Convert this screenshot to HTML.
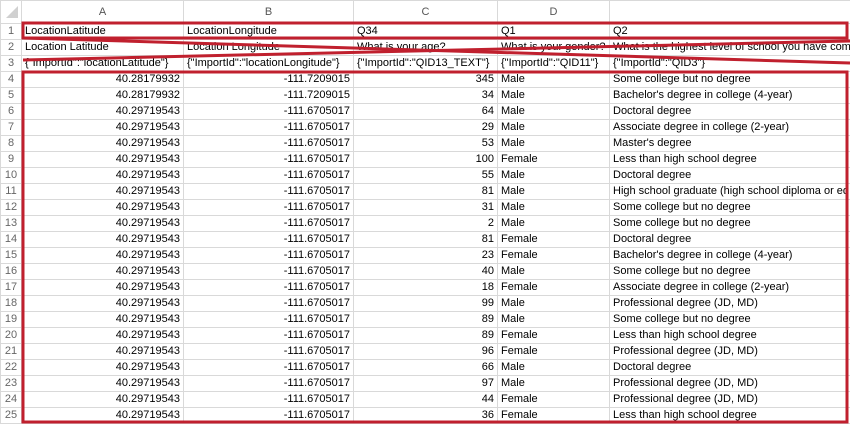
<!DOCTYPE html>
<html><head><meta charset="utf-8"><style>
body{margin:0;width:850px;height:424px;overflow:hidden;background:#fff;font-family:"Liberation Sans",Arial,sans-serif;font-size:11px;color:#000;position:relative}
table{border-collapse:collapse;table-layout:fixed;position:absolute;left:0;top:0;width:869px}
td{box-sizing:border-box;height:16px;padding:0 3px;border:1px solid #d9d9d9;white-space:nowrap;overflow:hidden;line-height:15px}
tr.h td{height:23px;text-align:center;color:#555;font-size:11px}
td.n{text-align:center;color:#666;padding:0;background:#fff}
td.r{text-align:right}
svg{position:absolute;left:0;top:0}
</style></head><body>
<table>
<colgroup><col style="width:21px"><col style="width:162px"><col style="width:170px"><col style="width:144px"><col style="width:112px"><col style="width:260px"></colgroup>
<tr class="h"><td class="n" style="width:21px"></td><td style="width:162px">A</td><td style="width:170px">B</td><td style="width:144px">C</td><td style="width:112px">D</td><td style="width:260px"></td></tr>
<tr><td class="n">1</td><td>LocationLatitude</td><td>LocationLongitude</td><td>Q34</td><td>Q1</td><td>Q2</td></tr>
<tr><td class="n">2</td><td>Location Latitude</td><td>Location Longitude</td><td>What is your age?</td><td>What is your gender?</td><td>What is the highest level of school you have com</td></tr>
<tr><td class="n">3</td><td>{"ImportId":"locationLatitude"}</td><td>{"ImportId":"locationLongitude"}</td><td>{"ImportId":"QID13_TEXT"}</td><td>{"ImportId":"QID11"}</td><td>{"ImportId":"QID3"}</td></tr>
<tr><td class="n">4</td><td class="r">40.28179932</td><td class="r">-111.7209015</td><td class="r">345</td><td>Male</td><td>Some college but no degree</td></tr>
<tr><td class="n">5</td><td class="r">40.28179932</td><td class="r">-111.7209015</td><td class="r">34</td><td>Male</td><td>Bachelor's degree in college (4-year)</td></tr>
<tr><td class="n">6</td><td class="r">40.29719543</td><td class="r">-111.6705017</td><td class="r">64</td><td>Male</td><td>Doctoral degree</td></tr>
<tr><td class="n">7</td><td class="r">40.29719543</td><td class="r">-111.6705017</td><td class="r">29</td><td>Male</td><td>Associate degree in college (2-year)</td></tr>
<tr><td class="n">8</td><td class="r">40.29719543</td><td class="r">-111.6705017</td><td class="r">53</td><td>Male</td><td>Master's degree</td></tr>
<tr><td class="n">9</td><td class="r">40.29719543</td><td class="r">-111.6705017</td><td class="r">100</td><td>Female</td><td>Less than high school degree</td></tr>
<tr><td class="n">10</td><td class="r">40.29719543</td><td class="r">-111.6705017</td><td class="r">55</td><td>Male</td><td>Doctoral degree</td></tr>
<tr><td class="n">11</td><td class="r">40.29719543</td><td class="r">-111.6705017</td><td class="r">81</td><td>Male</td><td>High school graduate (high school diploma or eq</td></tr>
<tr><td class="n">12</td><td class="r">40.29719543</td><td class="r">-111.6705017</td><td class="r">31</td><td>Male</td><td>Some college but no degree</td></tr>
<tr><td class="n">13</td><td class="r">40.29719543</td><td class="r">-111.6705017</td><td class="r">2</td><td>Male</td><td>Some college but no degree</td></tr>
<tr><td class="n">14</td><td class="r">40.29719543</td><td class="r">-111.6705017</td><td class="r">81</td><td>Female</td><td>Doctoral degree</td></tr>
<tr><td class="n">15</td><td class="r">40.29719543</td><td class="r">-111.6705017</td><td class="r">23</td><td>Female</td><td>Bachelor's degree in college (4-year)</td></tr>
<tr><td class="n">16</td><td class="r">40.29719543</td><td class="r">-111.6705017</td><td class="r">40</td><td>Male</td><td>Some college but no degree</td></tr>
<tr><td class="n">17</td><td class="r">40.29719543</td><td class="r">-111.6705017</td><td class="r">18</td><td>Female</td><td>Associate degree in college (2-year)</td></tr>
<tr><td class="n">18</td><td class="r">40.29719543</td><td class="r">-111.6705017</td><td class="r">99</td><td>Male</td><td>Professional degree (JD, MD)</td></tr>
<tr><td class="n">19</td><td class="r">40.29719543</td><td class="r">-111.6705017</td><td class="r">89</td><td>Male</td><td>Some college but no degree</td></tr>
<tr><td class="n">20</td><td class="r">40.29719543</td><td class="r">-111.6705017</td><td class="r">89</td><td>Female</td><td>Less than high school degree</td></tr>
<tr><td class="n">21</td><td class="r">40.29719543</td><td class="r">-111.6705017</td><td class="r">96</td><td>Female</td><td>Professional degree (JD, MD)</td></tr>
<tr><td class="n">22</td><td class="r">40.29719543</td><td class="r">-111.6705017</td><td class="r">66</td><td>Male</td><td>Doctoral degree</td></tr>
<tr><td class="n">23</td><td class="r">40.29719543</td><td class="r">-111.6705017</td><td class="r">97</td><td>Male</td><td>Professional degree (JD, MD)</td></tr>
<tr><td class="n">24</td><td class="r">40.29719543</td><td class="r">-111.6705017</td><td class="r">44</td><td>Female</td><td>Professional degree (JD, MD)</td></tr>
<tr><td class="n">25</td><td class="r">40.29719543</td><td class="r">-111.6705017</td><td class="r">36</td><td>Female</td><td>Less than high school degree</td></tr>
</table>
<svg width="850" height="424">
<polygon points="6,18 18,6 18,18" fill="#d0d0d0"/>
<g fill="none" stroke="#c0202e" stroke-width="3">
<rect x="23" y="23" width="824" height="15"/>
<rect x="23" y="72" width="824" height="350"/>
<line x1="23" y1="38" x2="850" y2="63"/>
<line x1="23" y1="60" x2="850" y2="41"/>
</g>
</svg>
</body></html>
